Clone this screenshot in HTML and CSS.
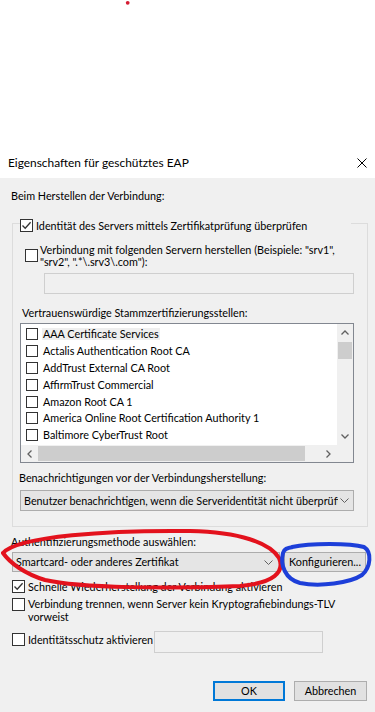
FILE: index.html
```html
<!DOCTYPE html>
<html lang="de">
<head>
<meta charset="utf-8">
<title>Eigenschaften für geschütztes EAP</title>
<link rel="stylesheet" href="styles.css">
</head>
<body>
<div class="screen">
  <header class="titlebar">
    <span class="title">Eigenschaften für geschütztes EAP</span>
    <svg class="close" viewBox="0 0 10 10" width="10" height="10"><path d="M0.5 0.5 L9.5 9.5 M9.5 0.5 L0.5 9.5" stroke="#000" stroke-width="1" fill="none"/></svg>
  </header>

  <main class="dialog">
    <div class="lbl intro">Beim Herstellen der Verbindung:</div>

    <section class="group">
      <div class="legend">
        <span class="cb"><svg viewBox="0 0 11 11" width="11" height="11"><polyline points="1.5,5.5 4.2,8.3 9.6,2.2" fill="none" stroke="#333" stroke-width="1.3"/></svg></span>
        <span class="cbtext">Identität des Servers mittels Zertifikatprüfung überprüfen</span>
      </div>

      <div class="chkrow servers">
        <span class="cb"></span>
        <span class="cbtext wrap">Verbindung mit folgenden Servern herstellen (Beispiele: "srv1",<br>"srv2", ".*\.srv3\.com"):</span>
      </div>

      <div class="textbox servers-box"></div>

      <div class="lbl ca-label">Vertrauenswürdige Stammzertifizierungsstellen:</div>

      <div class="listbox">
        <div class="items">
          <div class="item"><span class="cb small"></span><span class="itext focus">AAA Certificate Services</span></div>
          <div class="item"><span class="cb small"></span><span class="itext">Actalis Authentication Root CA</span></div>
          <div class="item"><span class="cb small"></span><span class="itext">AddTrust External CA Root</span></div>
          <div class="item"><span class="cb small"></span><span class="itext">AffirmTrust Commercial</span></div>
          <div class="item"><span class="cb small"></span><span class="itext">Amazon Root CA 1</span></div>
          <div class="item"><span class="cb small"></span><span class="itext">America Online Root Certification Authority 1</span></div>
          <div class="item"><span class="cb small"></span><span class="itext">Baltimore CyberTrust Root</span></div>
        </div>
        <div class="vscroll">
          <div class="sbtn"><svg viewBox="0 0 8 5" width="8" height="5"><polyline points="0.5,4.5 4,1 7.5,4.5" fill="none" stroke="#606060" stroke-width="1.3"/></svg></div>
          <div class="vthumb"></div>
          <div class="strack"></div>
          <div class="sbtn"><svg viewBox="0 0 8 5" width="8" height="5"><polyline points="0.5,0.5 4,4 7.5,0.5" fill="none" stroke="#606060" stroke-width="1.3"/></svg></div>
        </div>
        <div class="hscroll">
          <div class="sbtn"><svg viewBox="0 0 5 8" width="5" height="8"><polyline points="4.5,0.5 1,4 4.5,7.5" fill="none" stroke="#606060" stroke-width="1.3"/></svg></div>
          <div class="hthumb"></div>
          <div class="strack"></div>
          <div class="sbtn"><svg viewBox="0 0 5 8" width="5" height="8"><polyline points="0.5,0.5 4,4 0.5,7.5" fill="none" stroke="#606060" stroke-width="1.3"/></svg></div>
        </div>
        <div class="corner"></div>
      </div>

      <div class="lbl notify-label">Benachrichtigungen vor der Verbindungsherstellung:</div>

      <div class="combo notify">
        <span class="ctext">Benutzer benachrichtigen, wenn die Serveridentität nicht überprüft werden kann</span>
        <svg class="carrow" viewBox="0 0 9 5" width="9" height="5"><polyline points="0.5,0.5 4.5,4.5 8.5,0.5" fill="none" stroke="#606060" stroke-width="1"/></svg>
      </div>
    </section>

    <div class="lbl auth-label">Authentifizierungsmethode auswählen:</div>

    <div class="authrow">
      <div class="combo method">
        <span class="ctext">Smartcard- oder anderes Zertifikat</span>
        <svg class="carrow" viewBox="0 0 9 5" width="9" height="5"><polyline points="0.5,0.5 4.5,4.5 8.5,0.5" fill="none" stroke="#606060" stroke-width="1"/></svg>
      </div>
      <div class="btn config">Konfigurieren...</div>
    </div>

    <div class="chkrow fast">
      <span class="cb"><svg viewBox="0 0 11 11" width="11" height="11"><polyline points="1.5,5.5 4.2,8.3 9.6,2.2" fill="none" stroke="#333" stroke-width="1.3"/></svg></span>
      <span class="cbtext">Schnelle Wiederherstellung der Verbindung aktivieren</span>
    </div>

    <div class="chkrow top tlv">
      <span class="cb"></span>
      <span class="cbtext wrap2">Verbindung trennen, wenn Server kein Kryptografiebindungs-TLV<br>vorweist</span>
    </div>

    <div class="chkrow top ident">
      <span class="cb"></span>
      <span class="cbtext">Identitätsschutz aktivieren</span>
      <div class="textbox ident-box"></div>
    </div>

    <div class="buttons">
      <div class="btn ok">OK</div>
      <div class="btn cancel">Abbrechen</div>
    </div>
  </main>

  <svg class="annot" viewBox="0 0 375 712" width="375" height="712">
    <circle cx="127.7" cy="2.8" r="1.9" fill="#d51c32"/>
    <path d="M3 553 C18 536 110 530 190 531 C240 532 270 543 279 558 C285 572 274 583 240 586 C170 589 80 588 45 580 C25 574 10 563 3 553" fill="none" stroke="#e3121d" stroke-width="4" stroke-linecap="round"/>
    <path d="M292 547 C310 543 350 543 364 547 C372 552 371 567 362 575 C350 583 320 587 300 583 C285 579 280 565 283 553 C284 549 287 548 293 547" fill="none" stroke="#1d3fd9" stroke-width="4" stroke-linecap="round"/>
  </svg>
</div>
</body>
</html>
```

FILE: styles.css
```css
* { box-sizing: border-box; }
html, body { margin: 0; padding: 0; }
body {
  width: 375px;
  height: 712px;
  overflow: hidden;
  background: #f0f0f0;
  font-family: Lato, "Noto Sans", "Liberation Sans", sans-serif;
  font-size: 10.8px;
  color: #000;
}
.screen { position: relative; width: 375px; height: 712px; background: #f0f0f0; }

.titlebar {
  height: 178px;
  background: #fff;
  display: flex;
  align-items: flex-end;
  justify-content: space-between;
  padding: 0 8px 7px 8px;
}
.title { line-height: 16px; font-size: 11.9px; }
.close { margin-bottom: 3px; }

.dialog {
  display: flex;
  flex-direction: column;
  align-items: flex-start;
  padding: 0 7px 0 12px;
}
.lbl { line-height: 14px; white-space: nowrap; }
.intro { margin: 11px 0 0 -1px; }

.group {
  align-self: stretch;
  margin-top: 20px;
  border: 1px solid #dcdcdc;
  display: flex;
  flex-direction: column;
  align-items: flex-start;
  padding-bottom: 15px;
}
.legend {
  display: flex;
  align-items: center;
  width: 331px;
  margin: -5px 0 0 7px;
  background: #f0f0f0;
  line-height: 13px;
}

.cb {
  flex: none;
  width: 13px;
  height: 13px;
  border: 1px solid #333;
  background: #fff;
  display: flex;
  align-items: center;
  justify-content: center;
}
.cb.small { width: 12px; height: 12px; }
.cbtext { margin-left: 3px; white-space: nowrap; line-height: 13px; }
.cbtext.wrap { line-height: 11.5px; margin-left: 2px; }
.cbtext.wrap2 { line-height: 12.5px; }

.chkrow { display: flex; align-items: center; }
.chkrow.top { align-items: flex-start; }
.servers { margin: 12px 0 0 12px; }

.textbox {
  background: #f0f0f0;
  border: 1px solid #cfcfcf;
  height: 21px;
}
.servers-box { margin: 6px 0 0 31px; width: 310px; }

.ca-label { margin: 12px 0 0 9px; }

.listbox {
  margin: 3px 0 0 7px;
  width: 334px;
  height: 140px;
  border: 1px solid #828790;
  background: #fff;
  display: grid;
  grid-template-columns: 1fr 16px;
  grid-template-rows: 1fr 17px;
}
.items { overflow: hidden; padding-top: 2px; }
.item {
  height: 16.8px;
  display: flex;
  align-items: center;
  padding-left: 5px;
  white-space: nowrap;
}
.itext { margin-left: 4px; padding: 0 1px; line-height: 12px; }
.itext.focus { background: #efefef; }

.vscroll { background: #f0f0f0; display: flex; flex-direction: column; }
.hscroll { background: #f0f0f0; display: flex; }
.corner { background: #f0f0f0; }
.sbtn { flex: none; width: 17px; height: 17px; display: flex; align-items: center; justify-content: center; }
.vscroll .sbtn { width: 16px; }
.strack { flex: 1; }
.vthumb { flex: none; height: 17px; margin: 1px 1px 0 1px; background: #cdcdcd; }
.hthumb { flex: none; width: 267px; margin: 1px 0; background: #cdcdcd; }

.notify-label { margin: 8px 0 0 6px; }

.combo {
  display: flex;
  align-items: center;
  background: #e5e5e5;
  border: 1px solid #acacac;
}
.ctext { flex: 1; min-width: 0; overflow: hidden; white-space: nowrap; padding-left: 3px; line-height: 16px; }
.notify { margin: 5px 0 0 7px; width: 334px; height: 21px; }
.notify .carrow { margin: 0 4px 0 2px; }

.auth-label { margin: 8px 0 0 -1px; }
.authrow { display: flex; margin-top: 3px; }
.method { width: 268px; height: 20px; }
.method .carrow { margin: 0 6px 0 2px; }

.btn {
  background: #e1e1e1;
  border: 1px solid #adadad;
  display: flex;
  align-items: center;
  justify-content: center;
  white-space: nowrap;
  line-height: 14px;
}
.config { width: 82px; height: 20px; margin-left: 4px; }

.fast { margin-top: 8px; }
.tlv { margin-top: 5px; }
.ident { margin-top: 10px; }
.ident-box { width: 169px; margin: -2px 0 0 1px; height: 21.5px; }

.buttons {
  align-self: stretch;
  display: flex;
  justify-content: flex-end;
  gap: 9px;
  margin: 28px 1px 0 0;
}
.ok { width: 72px; height: 20px; border: 2px solid #0078d7; }
.cancel { width: 73px; height: 20px; }

.annot { position: absolute; left: 0; top: 0; pointer-events: none; }
```
